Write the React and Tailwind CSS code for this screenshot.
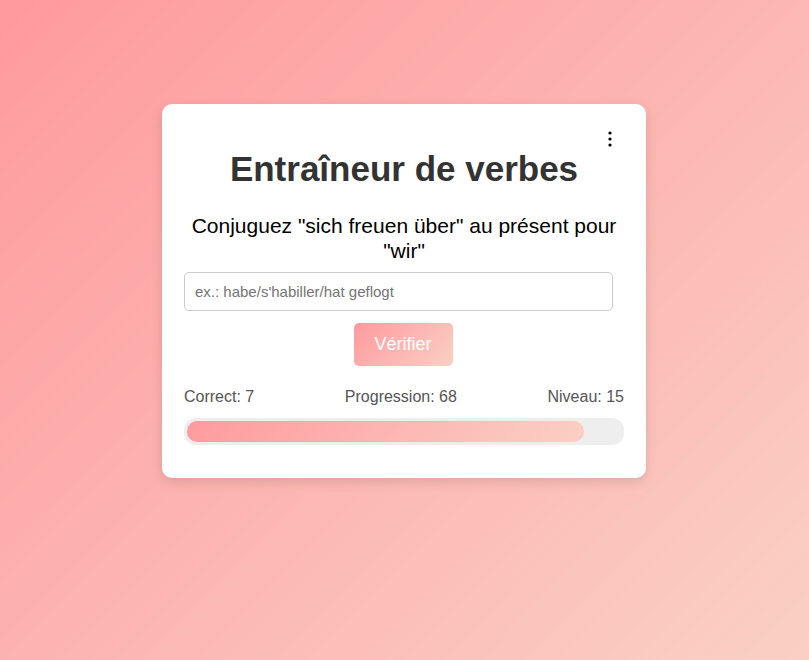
import React, { useState } from "react";

const App = () => {
  const [answer, setAnswer] = useState("");
  const stats = { correct: 7, progression: 68, niveau: 15 };

  return (
    <div
      className="min-h-screen w-full bg-[linear-gradient(135deg,#ff9a9e_0%,#fad0c4_100%)] flex justify-center pt-[104px] pr-[1px]"
      style={{ fontFamily: '"Liberation Sans", Arial, sans-serif' }}
    >
      {/* Card */}
      <div className="relative w-[484px] h-[374px] bg-white rounded-[10px] shadow-[0_4px_12px_rgba(0,0,0,0.12)] px-[22px] pt-[44px] flex flex-col items-center">
        {/* Menu */}
        <button className="absolute top-[26px] right-[32px] w-[8px] h-[18px] flex items-center justify-center">
          <svg width="4" height="16" viewBox="0 0 4 16">
            <circle cx="2" cy="2" r="1.6" fill="#000" />
            <circle cx="2" cy="8" r="1.6" fill="#000" />
            <circle cx="2" cy="14" r="1.6" fill="#000" />
          </svg>
        </button>

        <h1 className="text-[35px] leading-[41px] font-bold text-[#333] text-center">
          Entraîneur de verbes
        </h1>

        <p className="mt-[24px] text-[21px] leading-[25px] text-black text-center w-[440px]">
          Conjuguez "sich freuen über" au présent pour "wir"
        </p>

        <input
          value={answer}
          onChange={(e) => setAnswer(e.target.value)}
          placeholder="ex.: habe/s'habiller/hat geflogt"
          className="mt-[9px] self-start w-[429px] h-[39px] px-[10px] border border-[#ccc] rounded-[5px] text-[15px] text-[#333] placeholder:text-[#757575] outline-none"
        />

        <button className="mt-[12px] mr-[2px] w-[99px] h-[43px] rounded-[5px] bg-[linear-gradient(135deg,#ff9a9e_0%,#fad0c4_100%)] text-white text-[18px]">
          Vérifier
        </button>

        {/* Stats */}
        <div className="mt-[22px] w-full flex justify-between text-[16px] leading-[18px] text-[#555]">
          <span>Correct: {stats.correct}</span>
          <span>Progression: {stats.progression}</span>
          <span>Niveau: {stats.niveau}</span>
        </div>

        {/* Progress bar */}
        <div className="mt-[12px] w-full h-[27px] bg-[#eee] rounded-[12px] p-[3px]">
          <div
            className="h-full rounded-[10px] bg-[linear-gradient(135deg,#ff9a9e_0%,#fad0c4_100%)]"
            style={{ width: "397px" }}
          />
        </div>
      </div>
    </div>
  );
};

export default App;
